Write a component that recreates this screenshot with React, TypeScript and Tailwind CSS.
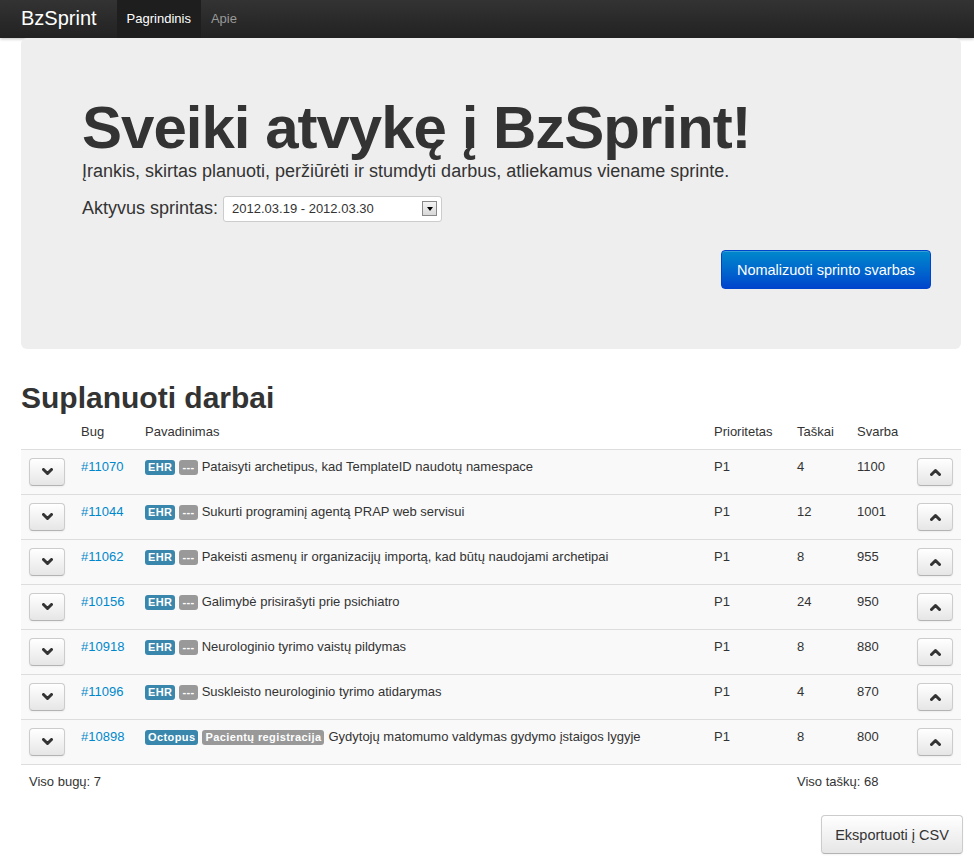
interface Bug {
  id: string;
  project: string;
  component: string;
  title: string;
  priority: string;
  points: number;
  weight: number;
}

const bugs: Bug[] = [
  { id: '#11070', project: 'EHR', component: '---', title: 'Pataisyti archetipus, kad TemplateID naudotų namespace', priority: 'P1', points: 4, weight: 1100 },
  { id: '#11044', project: 'EHR', component: '---', title: 'Sukurti programinį agentą PRAP web servisui', priority: 'P1', points: 12, weight: 1001 },
  { id: '#11062', project: 'EHR', component: '---', title: 'Pakeisti asmenų ir organizacijų importą, kad būtų naudojami archetipai', priority: 'P1', points: 8, weight: 955 },
  { id: '#10156', project: 'EHR', component: '---', title: 'Galimybė prisirašyti prie psichiatro', priority: 'P1', points: 24, weight: 950 },
  { id: '#10918', project: 'EHR', component: '---', title: 'Neurologinio tyrimo vaistų pildymas', priority: 'P1', points: 8, weight: 880 },
  { id: '#11096', project: 'EHR', component: '---', title: 'Suskleisto neurologinio tyrimo atidarymas', priority: 'P1', points: 4, weight: 870 },
  { id: '#10898', project: 'Octopus', component: 'Pacientų registracija', title: 'Gydytojų matomumo valdymas gydymo įstaigos lygyje', priority: 'P1', points: 8, weight: 800 },
];

const btn =
  'inline-flex items-center justify-center rounded-[4px] border border-[#ccc] border-b-[#b3b3b3] bg-gradient-to-b from-white to-[#e6e6e6] text-[#333] shadow-[inset_0_1px_0_rgba(255,255,255,0.2),0_1px_2px_rgba(0,0,0,0.05)]';

const label = 'rounded-[3px] px-[3px] pt-[1px] pb-[2px] text-[11px] font-bold leading-[14px] tracking-[0.4px] text-white';

// glyphicon-like chevron
const Chevron = ({ up }: { up?: boolean }) => (
  <svg width="11" height="8" viewBox="0 0 11 8" className="text-[#333]">
    <polyline
      points={up ? '1.5,6.5 5.5,2.5 9.5,6.5' : '1.5,1.5 5.5,5.5 9.5,1.5'}
      fill="none"
      stroke="currentColor"
      strokeWidth="3"
      strokeLinecap="round"
      strokeLinejoin="round"
    />
  </svg>
);

const MoveButton = ({ up }: { up?: boolean }) => (
  <button className={`${btn} h-[28px] w-[36px]`}>
    <Chevron up={up} />
  </button>
);

const App = () => {
  return (
    <div className="min-h-[900px] bg-white font-['Liberation_Sans',Arial,sans-serif] text-[13px] leading-[18px] text-[#333]">
      <div className="h-[38px] bg-gradient-to-b from-[#333] to-[#222] shadow-[0_1px_3px_rgba(0,0,0,0.25)]">
        <div className="flex h-full pl-[21px]">
          <span className="mr-[20px] pt-[5px] text-[20px] leading-[26px] text-white">BzSprint</span>
          <a className="flex h-full items-center bg-[#1e1e1e] px-[10px] text-white">Pagrindinis</a>
          <a className="flex h-full items-center px-[10px] text-[#999]">Apie</a>
        </div>
      </div>

      <div className="box-content w-[940px] pl-[21px]">
        <div className="rounded-[6px] bg-[#eee] px-[61px] pt-[60px] pb-[60px]">
          <h1 className="text-[60px] font-bold leading-[60px] tracking-[-1px] text-[#333]">Sveiki atvykę į BzSprint!</h1>
          <p className="text-[18px] leading-[27px]">Įrankis, skirtas planuoti, peržiūrėti ir stumdyti darbus, atliekamus viename sprinte.</p>
          <div className="mt-[10px] flex items-center gap-[5px]">
            <span className="text-[18px] leading-[27px]">Aktyvus sprintas:</span>
            <div className="flex h-[26px] w-[219px] items-center justify-between rounded-[3px] border border-[#ccc] bg-white pl-[8px] pr-[4px] text-[13px]">
              <span>2012.03.19 - 2012.03.30</span>
              <span className="flex h-[15px] w-[15px] items-center justify-center border border-[#888] bg-gradient-to-b from-[#f4f4f4] to-[#d8d8d8]">
                <span className="h-0 w-0 border-x-[3.5px] border-t-[4px] border-x-transparent border-t-black" />
              </span>
            </div>
          </div>
          <div className="-mr-[31px] mt-[28px] flex justify-end">
            <button className="h-[39px] w-[210px] rounded-[4px] border border-[#0044cc] bg-gradient-to-b from-[#0088cc] to-[#0044cc] text-[14.5px] text-white shadow-[inset_0_1px_0_rgba(255,255,255,0.2)]">
              Nomalizuoti sprinto svarbas
            </button>
          </div>
        </div>

        <h2 className="mt-[32px] text-[30px] font-bold leading-[34px]">Suplanuoti darbai</h2>

        <table className="w-[940px] table-fixed border-collapse">
          <colgroup>
            <col className="w-[52px]" />
            <col className="w-[64px]" />
            <col className="w-[569px]" />
            <col className="w-[83px]" />
            <col className="w-[60px]" />
            <col className="w-[60px]" />
            <col className="w-[52px]" />
          </colgroup>
          <thead>
            <tr className="border-b border-[#ddd] text-left">
              <th className="p-[8px] font-normal" />
              <th className="p-[8px] font-normal">Bug</th>
              <th className="p-[8px] font-normal">Pavadinimas</th>
              <th className="p-[8px] font-normal">Prioritetas</th>
              <th className="p-[8px] font-normal">Taškai</th>
              <th className="p-[8px] font-normal">Svarba</th>
              <th className="p-[8px] font-normal" />
            </tr>
          </thead>
          <tbody>
            {bugs.map((b) => (
              <tr key={b.id} className="border-b border-[#ddd] bg-[#f9f9f9] align-top">
                <td className="p-[8px]">
                  <MoveButton />
                </td>
                <td className="p-[8px] text-[#0088cc]">{b.id}</td>
                <td className="whitespace-nowrap p-[8px]">
                  <span className={`${label} mr-[4px] bg-[#3a87ad]`}>{b.project}</span>
                  <span className={`${label} mr-[4px] bg-[#999]`}>{b.component}</span>
                  {b.title}
                </td>
                <td className="p-[8px]">{b.priority}</td>
                <td className="p-[8px]">{b.points}</td>
                <td className="p-[8px]">{b.weight}</td>
                <td className="p-[8px]">
                  <MoveButton up />
                </td>
              </tr>
            ))}
          </tbody>
          <tfoot>
            <tr className="align-top">
              <td colSpan={3} className="p-[8px]">Viso bugų: 7</td>
              <td className="p-[8px]" />
              <td colSpan={2} className="p-[8px]">Viso taškų: 68</td>
              <td className="p-[8px]" />
            </tr>
          </tfoot>
        </table>

        <div className="-mr-[2px] mt-[16px] flex justify-end">
          <button className={`${btn} h-[39px] w-[142px] text-[14.5px]`}>Eksportuoti į CSV</button>
        </div>

        <footer className="mt-[3px] pl-[2px] text-[13px] leading-[18px]">© BzSprint 2012</footer>
      </div>
    </div>
  );
};

export default App;
